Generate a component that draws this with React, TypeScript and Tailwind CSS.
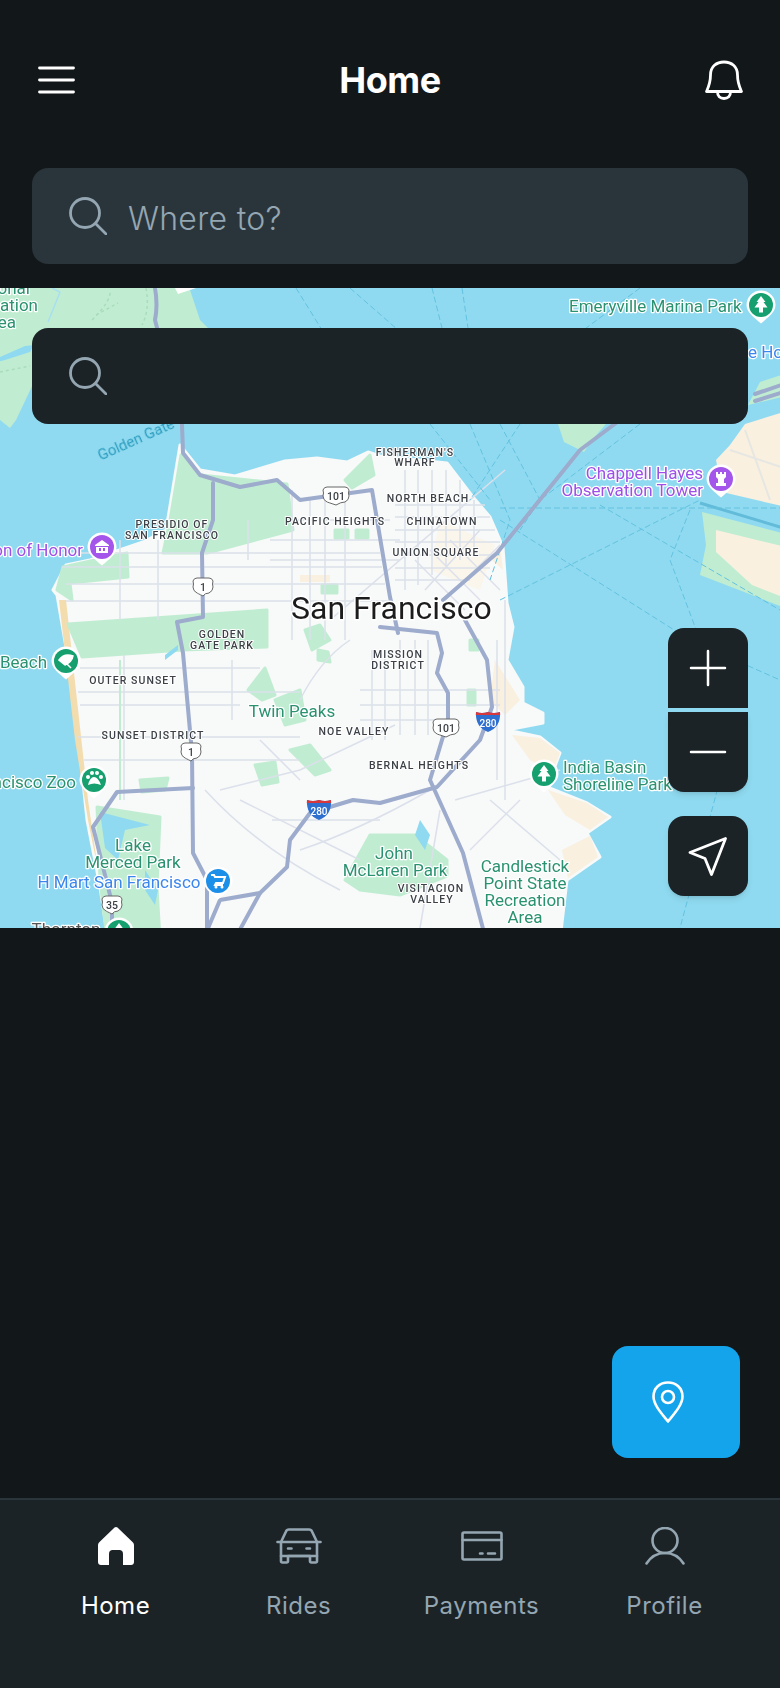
import type { ReactNode } from 'react'

const WATER = '#8fdaf0'
const LAND = '#f8f9f9'
const PARK = '#c0edd1'
const SAND = '#f9f0e0'
const HIGHWAY = '#9dabcd'
const ROAD = '#dbe0ea'

const GREEN = '#2b9270'
const PURPLE = '#9d4fe8'
const BLUE = '#3b86ee'

type LabelProps = {
  x: number
  y: number
  children: ReactNode
  fill?: string
  size?: number
  anchor?: 'start' | 'middle' | 'end'
}

function Place({ x, y, children, fill = GREEN, size = 17, anchor = 'middle' }: LabelProps) {
  return (
    <text
      x={x}
      y={y}
      fill={fill}
      fontSize={size}
      textAnchor={anchor}
      stroke="#ffffff"
      strokeWidth={2.5}
      strokeLinejoin="round"
      paintOrder="stroke"
    >
      {children}
    </text>
  )
}

function Area({ x, y, children }: { x: number; y: number; children: ReactNode }) {
  return (
    <text
      x={x}
      y={y}
      fill="#3c4146"
      fontSize={10.5}
      fontWeight={500}
      letterSpacing={1.05}
      textAnchor="middle"
      stroke="#ffffff"
      strokeWidth={2}
      strokeLinejoin="round"
      paintOrder="stroke"
    >
      {children}
    </text>
  )
}

function Pin({ x, y, color, children }: { x: number; y: number; color: string; children: ReactNode }) {
  return (
    <g transform={`translate(${x} ${y})`}>
      <path d="M-14.5 0a14.5 14.5 0 1 1 29 0c0 7-7 12-14.5 18.5C-7.500 12-14.500 7-14.500 0z" fill="#ffffff" />
      <circle r={12} fill={color} />
      {children}
    </g>
  )
}

function Tree() {
  return <path d="M0-9l4.500 6h-2l4 5.500h-4.500v5h-4v-5h-4.500l4-5.500h-2z" fill="#ffffff" />
}

function Shield({ x, y, label, w = 13 }: { x: number; y: number; label: string; w?: number }) {
  return (
    <g transform={`translate(${x} ${y})`}>
      <path
        d={`M${-w} -6q1-3 4-3h${2 * w - 8}q3 0 4 3q-1 3 0 6q0 4-4 6q-4 0-${w - 4} 3q-${w - 4}-3-${w - 4}-3q-4-2-4-6q1-3 0-6z`}
        fill="#ffffff"
        stroke="#666666"
        strokeWidth={1}
      />
      <text y={4} fill="#3c4146" fontSize={10.5} fontWeight={500} textAnchor="middle">
        {label}
      </text>
    </g>
  )
}

function Interstate({ x, y }: { x: number; y: number }) {
  return (
    <g transform={`translate(${x} ${y})`}>
      <path d="M-12-10q6 2 12 0q6 2 12 0q1 15-12 20q-13-5-12-20z" fill="#2f6fd0" />
      <path d="M-12-10q6 2 12 0q6 2 12 0l.200 3h-24.400z" fill="#d8393a" />
      <text y={5} fill="#ffffff" fontSize={10} fontWeight={500} textAnchor="middle">
        280
      </text>
    </g>
  )
}

function MapPicture() {
  const richmondStreets = [
    'M62 553H380',
    'M62 567H382',
    'M66 584H385',
    'M66 601H390',
    'M80 668H260',
    'M78 692H300',
    'M80 705H240',
    'M78 737H300',
    'M84 760H300',
    'M120 540V620',
    'M158 540V620',
    'M124 655V800',
    'M232 660V720',
    'M248 520V560',
    'M292 490V640',
    'M310 500V640',
    'M325 500V640',
    'M345 495V640',
    'M270 560H400',
    'M270 540H400',
    'M290 520H390',
  ]
  const downtownStreets = [
    'M395 505H485',
    'M395 517H490',
    'M395 530H495',
    'M395 542H500',
    'M395 555H500',
    'M395 568H490',
    'M395 580H470',
    'M405 470V590',
    'M418 470V585',
    'M432 470V575',
    'M446 470V565',
    'M460 480V560',
    'M474 500V550',
    'M400 640V735',
    'M415 640V735',
    'M428 640V735',
    'M372 650V740',
    'M385 650V740',
    'M360 690H500',
    'M360 705H500',
    'M360 720H450',
    'M450 540L500 590',
    'M430 550L480 600',
    'M415 560L465 610',
    'M500 545L445 600',
    'M480 530L425 590',
    'M330 620L505 470',
    'M505 600V800',
    'M497 640V780',
    'M220 790L300 770L395 725',
    'M240 800Q300 830 360 860',
    'M205 790Q260 850 340 890',
    'M300 850Q360 830 430 790',
    'M300 700Q320 660 350 640',
    'M272 820H380',
    'M455 800L560 770',
    'M490 800L560 860',
    'M470 850L520 800',
    'M440 810L420 928',
    'M300 780L260 740',
  ]
  const shippingLanes = [
    'M296 288L322 330',
    'M350 288L398 330',
    'M432 288L442 328',
    'M462 288L468 328',
    'M640 288L570 340',
    'M500 424L540 500L520 530',
    'M470 424L510 520L490 580',
    'M430 424L490 500',
    'M600 505L780 610',
    'M500 520L690 640L780 680',
    'M500 600L700 500',
    'M690 510L670 560L700 640',
    'M640 424L540 500',
    'M720 780L680 928',
    'M520 424L470 500',
    'M500 508L780 508',
  ]
  return (
    <svg viewBox="0 288 780 640" className="block w-full h-[640px] font-[family-name:Roboto,sans-serif]">
      <defs>
        <filter id="soft" x="-2%" y="-2%" width="104%" height="104%">
          <feGaussianBlur stdDeviation="0.6" />
        </filter>
        <filter id="softText" x="-2%" y="-2%" width="104%" height="104%">
          <feGaussianBlur stdDeviation="0.4" />
        </filter>
      </defs>
      <rect x="-10" y="278" width="800" height="660" fill={WATER} />
      <g filter="url(#soft)">
        {/* marin side */}
        <path
          d="M-10 278H186L200 320L215 335L220 380H60L34 382L16 420L10 428L0 420L-10 415z"
          fill={PARK}
        />
        <path d="M-10 358L0 357L25 346L34 345L30 352L5 360L-10 364z" fill={WATER} />
        <path d="M170 278H192L196 288L178 294z" fill="#ffffff" />
        <g fill="none" stroke="#a9dcbc" strokeWidth={1.5} strokeDasharray="3 3">
          <path d="M146 288Q150 310 142 325" />
          <path d="M92 320Q112 300 110 290" />
          <path d="M96 315L118 303" />
          <path d="M0 372L30 366" />
        </g>
        <path d="M52 288L60 292L48 322" fill="none" stroke="#a8dff0" strokeWidth={1.5} />

        {/* east bay and the islands */}
        <path d="M790 410L745 424L730 445L716 460L722 492L790 508z" fill={SAND} />
        <path d="M760 382L790 372V395L748 405z" fill={PARK} />
        <path d="M558 424L564 442L584 452L592 440L606 424z" fill={PARK} />
        <path d="M702 512L790 535V610L752 595L700 575L706 545z" fill={PARK} />
        <path d="M716 530L790 548V600L752 585L716 552z" fill={SAND} />
        <path d="M700 503L790 530" fill="none" stroke="#62bcd9" strokeWidth={3} />
        <path d="M730 450L790 470M745 430L770 500" fill="none" stroke="#e6e6e2" strokeWidth={2} />

        {/* the city */}
        <path
          d="M180 445L200 470L235 476L285 461L317 458L347 462L368 452L380 456L447 463L473 497L490 517L503 547L507 603L513 627L507 660L523 687L523 703L543 713L543 723L507 730L540 737L560 753L547 787L587 803L610 817L587 833L600 857L567 880L560 940H108L100 887L87 820L80 753L67 653L57 595L53 590L66 565L90 560L143 542L166 530z"
          fill={LAND}
          stroke={LAND}
          strokeWidth={3}
          strokeLinejoin="round"
        />
        <g fill={SAND}>
          <path d="M512 735L540 738L560 753L552 772L530 760z" />
          <path d="M548 790L587 803L608 817L590 830L565 815z" />
          <path d="M590 836L598 857L568 878L562 850z" />
          <path d="M500 545L503 570L492 560zM495 660L520 700L505 715L490 700z" />
          <path d="M300 575L330 575L330 582L300 582z" />
        </g>
        <path d="M440 520L495 545L480 590L430 570z" fill="#fbf6ec" />
        <path d="M59 600L66 600L88 800L98 870L88 820L75 740z" fill="#f3dcae" />

        {/* parks */}
        <g fill={PARK} stroke={PARK} strokeWidth={3} strokeLinejoin="round">
          <path d="M181 455L200 475L287 484L293 530L207 553L163 553L170 520z" />
          <path d="M57 590L63 567L127 553L128 577L70 583L72 600z" />
          <path d="M68 624L267 610L267 647L183 650L82 657z" />
          <path d="M97 807L160 817L157 887L160 940H107L100 880z" />
          <path d="M345 480L370 455L374 475L352 488z" />
          <path d="M248 690L265 668L275 695L262 700z" />
          <path d="M275 700L300 690L305 720L285 725z" />
          <path d="M305 630L320 625L330 640L312 650z" />
          <path d="M318 650L328 652L330 662L318 660z" />
          <path d="M290 750L315 775L330 770L310 745z" />
          <path d="M255 765L275 762L278 782L262 785z" />
          <path d="M345 880L370 835L415 835L447 860V876L400 895L360 890z" />
          <path d="M470 640H478V650H470zM468 690H475V705H468z" />
          <path d="M140 780L168 778L165 790L142 792z" />
          <path d="M322 585h15v8h-15zM335 530h13v8h-13zM356 530h12v8h-12z" />
        </g>
        <path d="M100 812L150 825L125 830L118 860L105 848z" fill={WATER} />
        <path d="M415 835L420 820L430 835L425 850z" fill={WATER} />
        <path d="M165 660L178 650V645L165 655z" fill={WATER} />
        <path d="M145 870L158 890L155 905L145 890z" fill={WATER} />

        {/* small streets */}
        <g fill="none" stroke={ROAD} strokeWidth={1.5}>
          {richmondStreets.map((d) => (
            <path key={d} d={d} />
          ))}
          {downtownStreets.map((d) => (
            <path key={d} d={d} />
          ))}
        </g>
        <path d="M120 660V800" fill="none" stroke={PARK} strokeWidth={2} />

        {/* ferry routes */}
        <g fill="none" stroke="#62c2e0" strokeWidth={1} strokeDasharray="6 3">
          {shippingLanes.map((d) => (
            <path key={d} d={d} />
          ))}
        </g>

        {/* highways */}
        <g fill="none" stroke={HIGHWAY} strokeWidth={4} strokeLinejoin="round" strokeLinecap="round">
          <path d="M155 288Q158 305 155 320L182 424L183 453L200 475L240 487L277 480L300 500L372 490L390 597L398 633" />
          <path d="M213 483V520L202 553L203 617L177 622L183 653L192 753L193 853L207 880V940" />
          <path d="M380 627L437 633L442 653L437 673L448 693L448 720L430 780L463 853L486 940" />
          <path d="M465 620L487 660L492 707L480 740L437 787L380 803L353 800L310 813L290 840L287 867L260 893L220 900L203 940" />
          <path d="M260 893L237 935" />
          <path d="M193 788L117 792L93 827L112 903V940" />
          <path d="M443 600L497 553L580 450L620 420" />
          <path d="M755 394L790 382M755 401L790 390" />
        </g>
      </g>

      <g filter="url(#softText)">
        <Place x={30} y={294} anchor="end">National</Place>
        <Place x={38} y={311} anchor="end">Recreation</Place>
        <Place x={16} y={328} anchor="end">Area</Place>
        <Place x={569} y={312} anchor="start">Emeryville Marina Park</Place>
        <Place x={748} y={358} anchor="start" fill={BLUE}>e House</Place>
        <text
          x={138}
          y={444}
          fill="#2d9dbf"
          fontSize={15}
          textAnchor="middle"
          transform="rotate(-24 138 444)"
        >
          Golden Gate
        </text>
        <Place x={83} y={556} anchor="end" fill={PURPLE}>Legion of Honor</Place>
        <Place x={703} y={479} anchor="end" fill={PURPLE}>Chappell Hayes</Place>
        <Place x={703} y={496} anchor="end" fill={PURPLE}>Observation Tower</Place>
        <Place x={47} y={668} anchor="end">Beach</Place>
        <Place x={76} y={788} anchor="end">Francisco Zoo</Place>
        <Place x={292} y={717}>Twin Peaks</Place>
        <Place x={133} y={851}>Lake</Place>
        <Place x={133} y={868}>Merced Park</Place>
        <Place x={119} y={888} fill={BLUE}>H Mart San Francisco</Place>
        <Place x={66} y={935} fill="#555555">Thornton</Place>
        <Place x={394} y={859}>John</Place>
        <Place x={395} y={876}>McLaren Park</Place>
        <Place x={525} y={872}>Candlestick</Place>
        <Place x={525} y={889}>Point State</Place>
        <Place x={525} y={906}>Recreation</Place>
        <Place x={525} y={923}>Area</Place>
        <Place x={563} y={773} anchor="start">India Basin</Place>
        <Place x={563} y={790} anchor="start">Shoreline Park</Place>

        <Area x={172} y={528}>PRESIDIO OF</Area>
        <Area x={172} y={539}>SAN FRANCISCO</Area>
        <Area x={335} y={525}>PACIFIC HEIGHTS</Area>
        <Area x={222} y={638}>GOLDEN</Area>
        <Area x={222} y={649}>GATE PARK</Area>
        <Area x={133} y={684}>OUTER SUNSET</Area>
        <Area x={153} y={739}>SUNSET DISTRICT</Area>
        <Area x={398} y={658}>MISSION</Area>
        <Area x={398} y={669}>DISTRICT</Area>
        <Area x={354} y={735}>NOE VALLEY</Area>
        <Area x={419} y={769}>BERNAL HEIGHTS</Area>
        <Area x={415} y={456}>FISHERMAN'S</Area>
        <Area x={415} y={466}>WHARF</Area>
        <Area x={428} y={502}>NORTH BEACH</Area>
        <Area x={442} y={525}>CHINATOWN</Area>
        <Area x={436} y={556}>UNION SQUARE</Area>
        <Area x={431} y={892}>VISITACION</Area>
        <Area x={432} y={903}>VALLEY</Area>
        <text
          x={291}
          y={619}
          fill="#1f1f1f"
          fontSize={32}
          stroke="#ffffff"
          strokeWidth={3}
          strokeLinejoin="round"
          paintOrder="stroke"
        >
          San Francisco
        </text>

        <Shield x={336} y={496} label="101" />
        <Shield x={446} y={728} label="101" />
        <Shield x={203} y={587} label="1" w={10} />
        <Shield x={191} y={752} label="1" w={10} />
        <Shield x={112} y={905} label="35" w={10} />
        <Interstate x={488} y={722} />
        <Interstate x={319} y={810} />

        <Pin x={761} y={305} color="#14a06f">
          <Tree />
        </Pin>
        <Pin x={721} y={479} color="#a557ea">
          <path d="M-5-7h2v2h2v-2h2v2h2v-2h2v5l-2 2v4h2v3h-10v-3h2v-4l-2-2z" fill="#ffffff" />
        </Pin>
        <Pin x={102} y={547} color="#a557ea">
          <path d="M-7-2L0-7L7-2v1H-7zM-6 0H6V6H-6z" fill="#ffffff" />
          <path d="M-3 1h2v3h-2zM1 1h2v3h-2z" fill="#a557ea" />
        </Pin>
        <Pin x={66} y={661} color="#14a06f">
          <path d="M-7-1Q-2-8 7-5Q6 1-1 4zM-1 1L5 7" fill="#ffffff" stroke="#ffffff" strokeWidth={1.5} />
        </Pin>
        <Pin x={94} y={780} color="#14a06f">
          <circle cx={-6} cy={-3} r={2} fill="#ffffff" />
          <circle cx={-2} cy={-7} r={2} fill="#ffffff" />
          <circle cx={3} cy={-7} r={2} fill="#ffffff" />
          <circle cx={7} cy={-3} r={2} fill="#ffffff" />
          <path d="M-6 5Q-4-3 0-3Q4-3 7 5Q0 2-6 5z" fill="#ffffff" />
        </Pin>
        <Pin x={218} y={881} color="#1f8fe8">
          <path d="M-7-6h3l1 2h10l-2 6h-7l-1 2h8" fill="none" stroke="#ffffff" strokeWidth={2} />
          <circle cx={-2} cy={6} r={1.500} fill="#ffffff" />
          <circle cx={4} cy={6} r={1.500} fill="#ffffff" />
        </Pin>
        <Pin x={544} y={774} color="#14a06f">
          <Tree />
        </Pin>
        <Pin x={119} y={932} color="#14a06f">
          <Tree />
        </Pin>
      </g>
    </svg>
  )
}

function SearchIcon({ className }: { className: string }) {
  return (
    <svg viewBox="0 0 38 38" fill="none" stroke="currentColor" strokeWidth={2.8} strokeLinecap="round" className={className}>
      <circle cx={16} cy={16} r={14.500} />
      <path d="M27 27L37 37" />
    </svg>
  )
}

function MapButton({ className, children }: { className: string; children: ReactNode }) {
  return (
    <button className={`flex w-20 h-20 items-center justify-center bg-[#1c2327] text-white ${className}`}>
      {children}
    </button>
  )
}

function NavItem({ label, active, children }: { label: string; active?: boolean; children: ReactNode }) {
  return (
    <div className={`flex flex-1 flex-col items-center ${active ? 'text-white' : 'text-[#94a6b1]'}`}>
      <div className="flex h-[40px] items-center justify-center">{children}</div>
      <span className="mt-[24px] text-[24px] leading-[32px] tracking-[0.5px]">{label}</span>
    </div>
  )
}

export default function App() {
  return (
    <div className="flex h-[1688px] w-[780px] flex-col bg-[#12171a] font-[family-name:Inter,sans-serif]">
      <header className="flex h-[168px] shrink-0 items-center justify-between px-[32px] pb-[8px]">
        <svg width={48} height={48} viewBox="0 0 48 48" fill="none" stroke="#ffffff" strokeWidth={2.8} strokeLinecap="round">
          <path d="M7.500 12H41.500M7.500 24H41.500M7.500 36H41.500" />
        </svg>
        <h1 className="text-[36px] font-bold text-white tracking-[-0.5px]">Home</h1>
        <svg width={48} height={48} viewBox="0 0 48 48" fill="none" stroke="#ffffff" strokeWidth={2.8} strokeLinejoin="round">
          <path d="M10.500 19C10.500 10.500 16.500 6 24 6S37.500 10.500 37.500 19C37.500 27 39.500 31 41.500 35.500H6.500C8.500 31 10.500 27 10.500 19Z" />
          <path d="M17.500 36C17.500 40 20 42.500 24 42.500S30.500 40 30.500 36" />
        </svg>
      </header>

      <div className="mx-[32px] flex h-[96px] shrink-0 items-center rounded-[16px] bg-[#2a343b] px-[37px] text-[#94a6b1]">
        <SearchIcon className="h-[38px] w-[38px] shrink-0" />
        <span className="ml-[21px] mt-[6px] text-[32px] font-light tracking-[0.3px]">Where to?</span>
      </div>

      <div className="relative mt-[24px] h-[640px] shrink-0 overflow-hidden bg-[#8fdaf0]">
        <MapPicture />
        <div className="absolute left-[32px] right-[32px] top-[40px] flex h-[96px] items-center rounded-[16px] bg-[#1c2327] px-[37px] text-[#94a6b1]">
          <SearchIcon className="h-[38px] w-[38px]" />
        </div>
        <div className="absolute right-[32px] top-[340px] flex flex-col">
          <MapButton className="rounded-t-[16px]">
            <svg width={38} height={38} viewBox="0 0 38 38" fill="none" stroke="currentColor" strokeWidth={2.5} strokeLinecap="round">
              <path d="M2 19H36M19 2V36" />
            </svg>
          </MapButton>
          <MapButton className="mt-[4px] rounded-b-[16px] shadow-md">
            <svg width={38} height={38} viewBox="0 0 38 38" fill="none" stroke="currentColor" strokeWidth={2.5} strokeLinecap="round">
              <path d="M2 19H36" />
            </svg>
          </MapButton>
          <MapButton className="mt-[24px] rounded-[16px] shadow-md">
            <svg width={40} height={40} viewBox="0 0 40 40" fill="none" stroke="currentColor" strokeWidth={2.8} strokeLinejoin="round">
              <path d="M37.500 2.500L2 16.500L17 22.500L23.500 38.500Z" />
            </svg>
          </MapButton>
        </div>
      </div>

      <main className="flex flex-1 items-end justify-end pb-[40px] pr-[40px]">
        <button className="flex h-[112px] w-[128px] items-center rounded-[16px] bg-[#14a4ec] pl-[40px]">
          <svg width={32} height={42} viewBox="0 0 32 42" fill="none" stroke="#ffffff" strokeWidth={2.6}>
            <path d="M16 40.500C10 33 1.500 24 1.500 15.500C1.500 7 8 1.500 16 1.500S30.500 7 30.500 15.500C30.500 24 22 33 16 40.500Z" strokeLinejoin="round" />
            <circle cx={16} cy={16} r={6} />
          </svg>
        </button>
      </main>

      <nav className="flex h-[190px] shrink-0 border-t-2 border-[#2a343b] bg-[#1c2327] px-[24px] pt-[26px]">
        <NavItem label="Home" active>
          <svg width={36} height={38} viewBox="0 0 36 38" fill="#ffffff">
            <path d="M18 0C19 0 20 .8 21 2L34.500 15C35.500 16 36 17 36 18.500V35C36 36.700 34.700 38 33 38H25V27C25 24 23.500 23 21.500 23H14.500C12.500 23 11 24 11 27V38H3C1.300 38 0 36.700 0 35V18.500C0 17 .5 16 1.500 15L15 2C16 .8 17 0 18 0Z" />
          </svg>
        </NavItem>
        <NavItem label="Rides">
          <svg width={46} height={36} viewBox="0 0 46 36" fill="none" stroke="currentColor" strokeWidth={2.6} strokeLinecap="round" strokeLinejoin="round">
            <path d="M1.500 14H44.500" />
            <path d="M5 14L10 3.500C10.500 2.200 11.500 1.500 13 1.500H33C34.500 1.500 35.500 2.200 36 3.500L41 14V33C41 34 40.500 34.500 39.500 34.500H35.500C34.500 34.500 34 34 34 33V28H12V33C12 34 11.500 34.500 10.500 34.500H6.500C5.500 34.500 5 34 5 33Z" />
            <path d="M5 28H41M12 20.500H15.500M30.500 20.500H34" />
          </svg>
        </NavItem>
        <NavItem label="Payments">
          <svg width={42} height={30} viewBox="0 0 42 30" fill="none" stroke="currentColor" strokeWidth={2.6} strokeLinecap="round" strokeLinejoin="round">
            <rect x={1.500} y={1.500} width={39} height={27} rx={1.500} />
            <path d="M1.500 9H40.500M19 22.500H21.500M27 22.500H34" />
          </svg>
        </NavItem>
        <NavItem label="Profile">
          <svg width={40} height={38} viewBox="0 0 40 38" fill="none" stroke="currentColor" strokeWidth={2.6} strokeLinecap="round">
            <circle cx={20} cy={13.500} r={12.500} />
            <path d="M1.500 36.500C6 29.500 12.500 26 20 26S34 29.500 38.500 36.500" />
          </svg>
        </NavItem>
      </nav>
    </div>
  )
}
